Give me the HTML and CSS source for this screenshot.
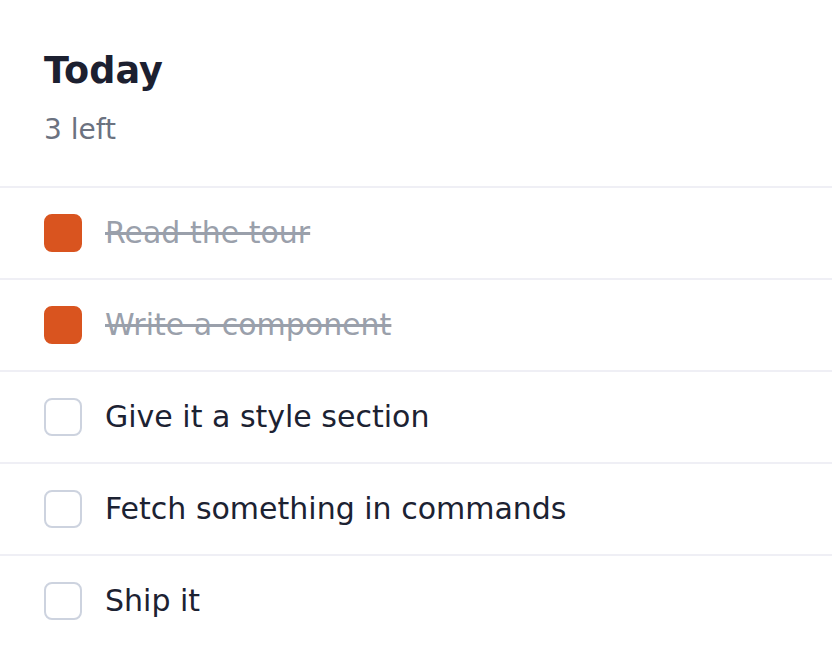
FILE: index.html
```html
<!DOCTYPE html>
<html>
<head>
<meta charset="utf-8">
<link rel="stylesheet" href="styles.css">
</head>
<body>
<div class="app">
  <header class="header">
    <h1 class="title">Today</h1>
    <p class="count">3 left</p>
  </header>
  <ul class="list">
    <li class="item done"><span class="box"></span><span class="label">Read the tour</span></li>
    <li class="item done"><span class="box"></span><span class="label">Write a component</span></li>
    <li class="item"><span class="box"></span><span class="label">Give it a style section</span></li>
    <li class="item"><span class="box"></span><span class="label">Fetch something in commands</span></li>
    <li class="item"><span class="box"></span><span class="label">Ship it</span></li>
  </ul>
</div>
</body>
</html>
```
FILE: styles.css
```css
html, body {
  margin: 0;
  padding: 0;
  background: #ffffff;
  font-family: "DejaVu Sans", sans-serif;
}
.header {
  padding: 50px 44px 40px;
}
.title {
  margin: 0;
  font-size: 36.6px;
  font-weight: bold;
  color: #1c2030;
  line-height: 42px;
}
.count {
  margin: 21px 0 0;
  font-size: 28px;
  line-height: 33px;
  color: #6b7280;
}
.list {
  list-style: none;
  margin: 0;
  padding: 0;
}
.item {
  display: flex;
  align-items: center;
  gap: 23px;
  height: 90px;
  padding: 0 44px;
  border-top: 2px solid #efeff5;
}
.box {
  flex: none;
  width: 38px;
  height: 38px;
  box-sizing: border-box;
  border: 2px solid #cdd3df;
  border-radius: 8px;
  background: #ffffff;
}
.done .box {
  border-color: #d9541f;
  background: #d9541f;
}
.label {
  font-size: 30px;
  line-height: 36px;
  padding-bottom: 1px;
  color: #1c2232;
}
.done .label {
  color: #9aa0ab;
  text-decoration: line-through;
}
```
